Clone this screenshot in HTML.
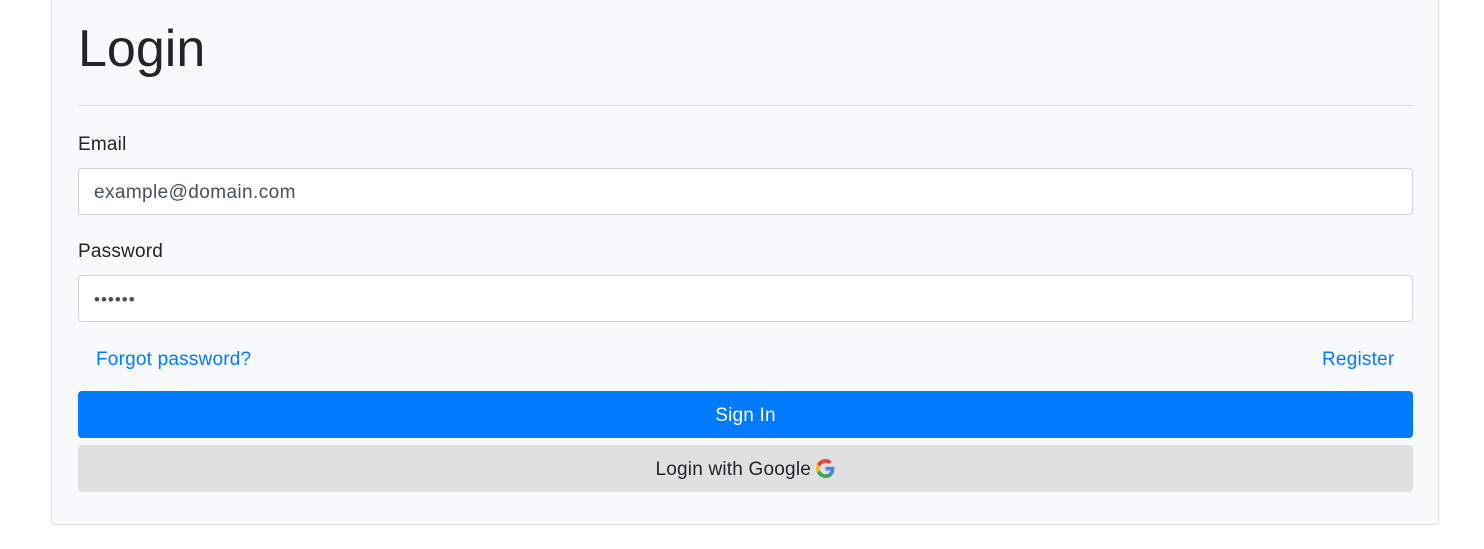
<!DOCTYPE html>
<html><head><style>
*{box-sizing:border-box;margin:0;padding:0}
body{width:1484px;height:549px;background:#fff;font-family:"Liberation Sans",sans-serif;color:#212529;position:relative;overflow:hidden}
.card{position:absolute;left:51px;top:-10px;width:1388px;height:535px;background:#f8f9fa;border:1px solid #dcdee0;border-radius:4px}
h1{position:absolute;left:78px;top:19px;font-size:52px;font-weight:500;line-height:60px;color:#212529}
.hr{position:absolute;left:78px;top:105px;width:1335px;height:1px;background:#dcdddf}
.lbl{position:absolute;left:78px;font-size:19px;line-height:22px;letter-spacing:0.2px}
.inp{position:absolute;left:78px;width:1335px;height:47px;background:#fff;border:1px solid #ced4da;border-radius:4px;padding-left:15px;font-size:19px;line-height:47px;color:#495057;letter-spacing:0.4px}
.link{position:absolute;top:348px;font-size:19px;line-height:24px;color:#007bff;letter-spacing:0.2px}
.btn{position:absolute;left:78px;width:1335px;height:47px;border-radius:4px;font-size:19px;line-height:50px;text-align:center;letter-spacing:0.2px}
</style></head><body>
<div class="card"></div>
<h1>Login</h1>
<div class="hr"></div>
<div class="lbl" style="top:134px">Email</div>
<div class="inp" style="top:168px">example@domain.com</div>
<div class="lbl" style="top:241px">Password</div>
<div class="inp" style="top:275px;color:#495057;font-size:17px;letter-spacing:1px">••••••</div>
<div class="link" style="left:96px">Forgot password?</div>
<div class="link" style="left:1322px">Register</div>
<div class="btn" style="top:391px;background:#007bff;color:#fff">Sign In</div>
<div class="btn" style="top:445px;background:#e0e0e0;color:#212529">Login with Google <svg width="19" height="19" viewBox="0 0 48 48" style="vertical-align:-3px"><path fill="#EA4335" d="M24 9.5c3.5 0 6.6 1.2 9 3.5l6.7-6.7C35.6 2.4 30.2 0 24 0 14.6 0 6.6 5.4 2.7 13.3l7.8 6C12.4 13.7 17.7 9.5 24 9.5z"/><path fill="#4285F4" d="M46.5 24.5c0-1.6-.1-3.1-.4-4.5H24v9h12.7c-.6 3-2.300 5.5-4.8 7.2l7.5 5.8c4.4-4.1 7.1-10.1 7.1-17.5z"/><path fill="#FBBC05" d="M10.5 28.7c-.5-1.5-.8-3-.8-4.7s.3-3.2.8-4.7l-7.8-6C1 16.6 0 20.2 0 24s1 7.4 2.7 10.7l7.8-6z"/><path fill="#34A853" d="M24 48c6.5 0 11.9-2.1 15.9-5.8l-7.5-5.8c-2.1 1.4-4.8 2.3-8.4 2.3-6.3 0-11.6-4.2-13.5-9.9l-7.8 6C6.6 42.6 14.6 48 24 48z"/></svg></div>
</body></html>
